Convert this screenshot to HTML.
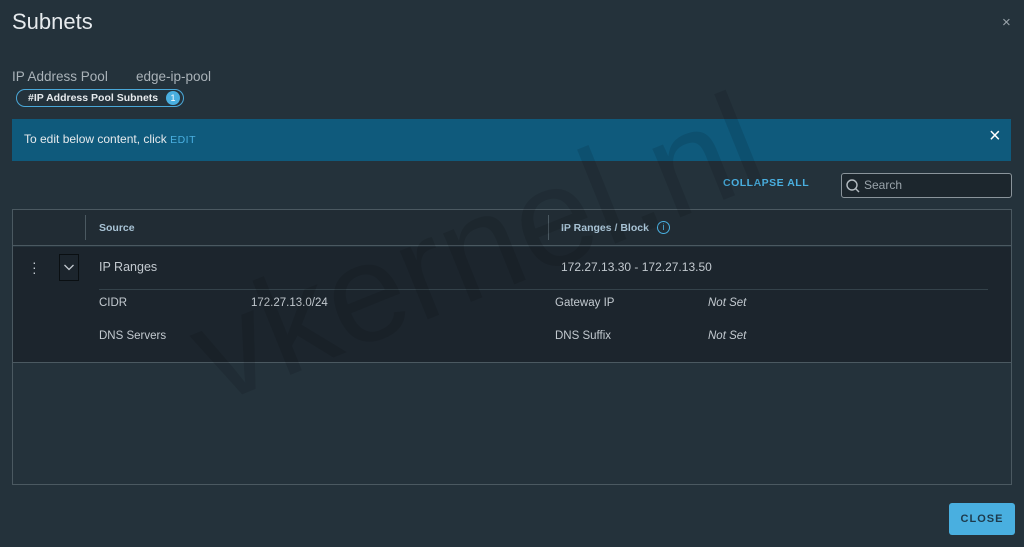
<!DOCTYPE html>
<html><head><style>
*{margin:0;padding:0;box-sizing:border-box}
body{width:1024px;height:547px;background:#24323b;font-family:"Liberation Sans",sans-serif;color:#c9d0d5;position:relative;overflow:hidden}
.a{position:absolute;line-height:1.2}
.t{font-size:11.5px;color:#c3cad0}
</style></head><body>
<div class="a" style="left:12px;top:9px;font-size:22px;color:#e6eaed">Subnets</div>
<div class="a" style="left:1002px;top:14px;font-size:15px;color:#9aa4ab">×</div>
<div class="a" style="left:12px;top:69px;font-size:13.5px;color:#aab3b9">IP Address Pool</div>
<div class="a" style="left:136px;top:69px;font-size:13.5px;color:#aab3b9">edge-ip-pool</div>
<div class="a" style="left:16px;top:89px;width:168px;height:18px;border:1px solid #4aa8d8;border-radius:9px;font-size:10.5px;font-weight:bold;color:#e6eaed;padding:2px 0 0 11px">#IP Address Pool Subnets</div>
<div class="a" style="left:166px;top:91px;width:14px;height:14px;border-radius:7px;background:#49afe0;font-size:9px;color:#fff;text-align:center;line-height:14px">1</div>
<div class="a" style="left:12px;top:119px;width:999px;height:42px;background:#0f5a7c"></div>
<div class="a" style="left:24px;top:132px;font-size:12px;color:#e6eaed">To edit below content, click <span style="color:#49afe0;font-size:10.5px;letter-spacing:.5px">EDIT</span></div>
<div class="a" style="left:989px;top:124px;font-size:20px;color:#fff">×</div>
<div class="a" style="left:723px;top:177px;font-size:10.5px;font-weight:bold;color:#49afe0;letter-spacing:.5px">COLLAPSE ALL</div>
<div class="a" style="left:841px;top:173px;width:171px;height:25px;border:1px solid #8a949b;border-radius:3px;background:#1c262d"></div>
<svg class="a" style="left:845px;top:178px" width="16" height="16"><circle cx="7" cy="7" r="5" fill="none" stroke="#b4bcc2" stroke-width="1.4"/><path d="M10.5 10.5L14 14" stroke="#b4bcc2" stroke-width="1.4"/></svg>
<div class="a" style="left:864px;top:178px;font-size:12px;color:#9aa4ab">Search</div>
<div class="a" style="left:12px;top:209px;width:1000px;height:276px;border:1px solid #4b5961;background:#24323b"></div>
<div class="a" style="left:13px;top:210px;width:998px;height:36px;background:#212c34;border-bottom:1px solid #4b5961"></div>
<div class="a" style="left:85px;top:215px;width:1px;height:25px;background:#4b5961"></div>
<div class="a" style="left:548px;top:215px;width:1px;height:25px;background:#4b5961"></div>
<div class="a" style="left:99px;top:222px;font-size:10.5px;font-weight:bold;color:#a9c4d6">Source</div>
<div class="a" style="left:561px;top:222px;font-size:10.5px;font-weight:bold;color:#a9c4d6">IP Ranges / Block</div>
<div class="a" style="left:657px;top:221px;width:13px;height:13px;border:1.3px solid #49afe0;border-radius:7px;font-size:9px;color:#49afe0;text-align:center;line-height:11px">i</div>
<div class="a" style="left:13px;top:247px;width:998px;height:116px;background:#1c252d;border-bottom:1px solid #4b5961"></div>
<div class="a" style="left:32px;top:260px;font-size:14px;color:#c3cad0;line-height:5px">·<br>·<br>·</div>
<div class="a" style="left:59px;top:254px;width:20px;height:27px;border:1px solid #0a0f12"></div>
<svg class="a" style="left:63px;top:262px" width="12" height="10"><path d="M1.5 3L6 7.5L10.5 3" fill="none" stroke="#c3cad0" stroke-width="1.3"/></svg>
<div class="a" style="left:99px;top:289px;width:889px;height:1px;background:#34424a"></div>
<div class="a" style="left:99px;top:260px;font-size:12.5px;color:#c3cad0">IP Ranges</div>
<div class="a" style="left:561px;top:260px;font-size:12px;color:#c3cad0">172.27.13.30 - 172.27.13.50</div>
<div class="a t" style="left:99px;top:297px">CIDR</div>
<div class="a t" style="left:251px;top:297px">172.27.13.0/24</div>
<div class="a t" style="left:555px;top:297px">Gateway IP</div>
<div class="a t" style="left:708px;top:297px;font-style:italic">Not Set</div>
<div class="a t" style="left:99px;top:330px">DNS Servers</div>
<div class="a t" style="left:555px;top:330px">DNS Suffix</div>
<div class="a t" style="left:708px;top:330px;font-style:italic">Not Set</div>
<div class="a" style="left:225px;top:285px;font-size:140px;color:rgba(0,0,0,0.1);transform:rotate(-22deg);transform-origin:left bottom;white-space:nowrap;line-height:1;font-weight:300">vkernel.nl</div>
<div class="a" style="left:949px;top:503px;width:66px;height:32px;background:#49afe0;border-radius:3px;font-size:11px;font-weight:bold;color:#1d3a4c;letter-spacing:1px;text-align:center;line-height:32px">CLOSE</div>
</body></html>
